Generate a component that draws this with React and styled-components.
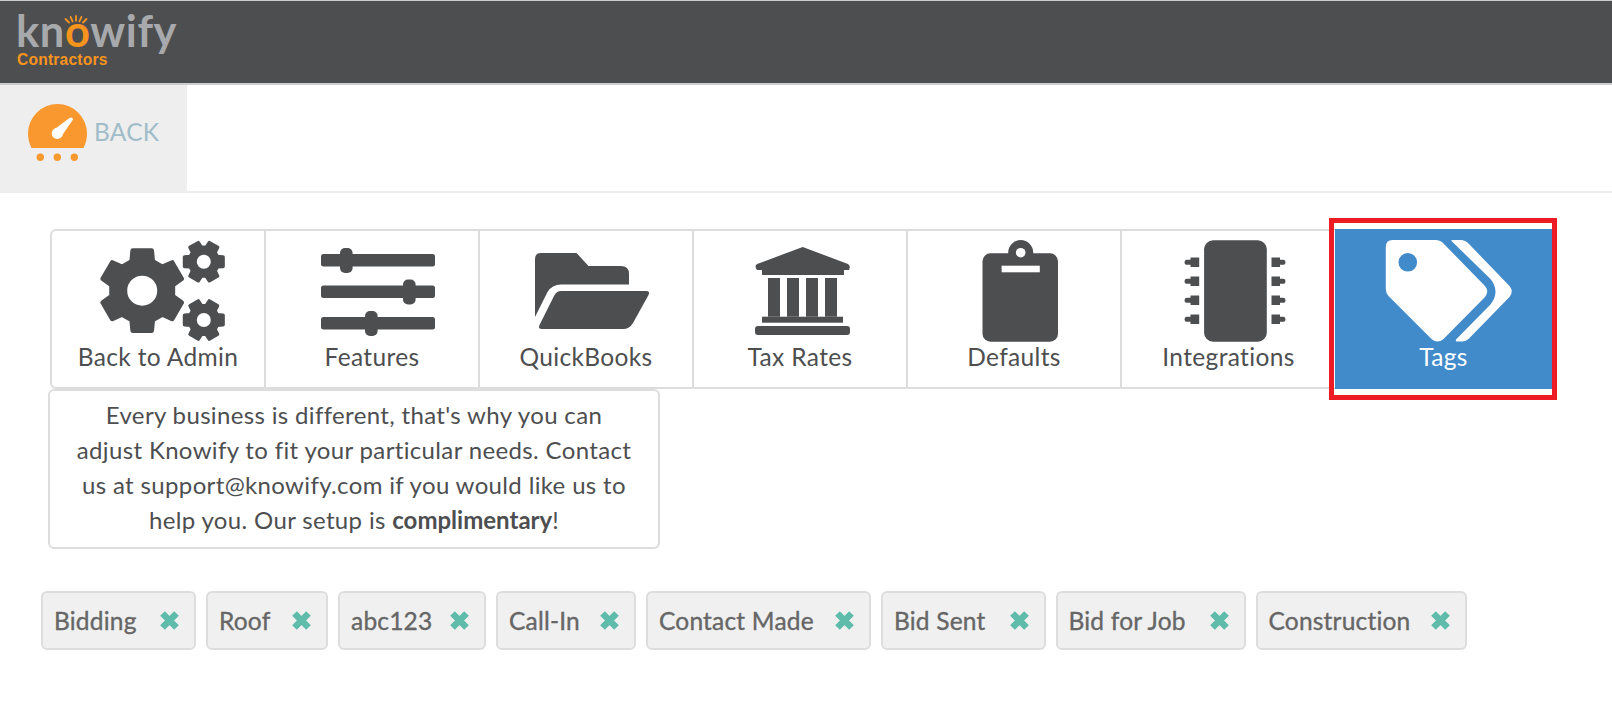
import React from "react";
import styled, { createGlobalStyle } from "styled-components";

const Global = createGlobalStyle`
  html, body { margin: 0; padding: 0; background: #fff; }
  body { font-family: Lato, "Open Sans", sans-serif; color: #4d4e50; }
`;

const Page = styled.div`
  width: 1612px;
  min-height: 717px;
  border-top: 1px solid #ccc;
  box-sizing: border-box;
  position: relative;
  overflow: hidden;
`;
const Header = styled.header`
  height: 82px;
  background: #4d4e50;
  border-bottom: 2px solid #ccc;
  padding-left: 16px;
`;
const Logo = styled.div`
  position: relative;
  width: 170px;
  padding-top: 7px;
`;
const LogoWord = styled.div`
  font: 700 43.5px/44px Lato, sans-serif;
  color: #a7a9ac;
  letter-spacing: 0.6px;
  height: 44px;
  span { color: #f7941e; }
`;
const LogoSub = styled.div`
  font: 700 15.6px/14px "Liberation Sans", sans-serif;
  letter-spacing: 0.2px;
  color: #f7941e;
  padding: 1px 0 0 1px;
`;
const Rays = styled.svg`
  position: absolute;
  left: 47px;
  top: 14px;
`;
const BackStrip = styled.nav`
  height: 106px;
  border-bottom: 2px solid #eee;
  display: flex;
`;
const BackLink = styled.a`
  width: 187px;
  background: #eee;
  display: flex;
  align-items: flex-start;
  gap: 6px;
  padding: 19px 0 0 28px;
  box-sizing: border-box;
`;
const BackText = styled.span`
  font: 400 24.5px/28px Lato, sans-serif;
  letter-spacing: 0.2px;
  color: #a0bdc9;
  margin-top: 14px;
`;
const Main = styled.main`
  padding: 36px 0 0 50px;
`;
const TabBar = styled.div`
  display: flex;
  height: 160px;
`;
const Tab = styled.a`
  position: relative;
  width: ${(p) => p.$w}px;
  box-sizing: border-box;
  display: flex;
  flex-direction: column;
  align-items: center;
  padding-top: ${(p) => (p.$active ? 9 : 7)}px;
  background: ${(p) => (p.$active ? "#428bca" : "#fff")};
  color: ${(p) => (p.$active ? "#fff" : "#4d4e50")};
  border-top: ${(p) => (p.$active ? "none" : "2px solid #ddd")};
  border-bottom: ${(p) => (p.$active ? "none" : "2px solid #ddd")};
  border-right: ${(p) => (p.$divider ? "2px solid #ddd" : "none")};
  border-left: ${(p) => (p.$first ? "2px solid #ddd" : "none")};
  border-radius: ${(p) => (p.$first ? "6px 0 0 6px" : "0")};
`;
const TabLabel = styled.span`
  font-size: 24.5px;
  line-height: 24px;
  margin-top: 1px;
  letter-spacing: 0.35px;
`;
const Highlight = styled.div`
  position: absolute;
  left: 1329px;
  top: 217px;
  width: 228px;
  height: 182px;
  box-sizing: border-box;
  border: 5.5px solid #ed1c24;
  pointer-events: none;
`;
const Notice = styled.p`
  width: 612px;
  height: 160px;
  box-sizing: border-box;
  margin: 0 0 0 -2px;
  border: 2px solid #ddd;
  border-radius: 6px;
  padding: 6px 26px 0;
  text-align: center;
  font-size: 24px;
  line-height: 35px;
  letter-spacing: 0.35px;
  color: #4d4e50;
  b { font-weight: 700; letter-spacing: 0; }
`;
const ChipRow = styled.div`
  display: flex;
  gap: 10px;
  margin: 42px 0 0 -9px;
`;
const Chip = styled.span`
  width: ${(p) => p.$w}px;
  height: 59px;
  box-sizing: border-box;
  display: flex;
  align-items: center;
  justify-content: space-between;
  padding: 0 14px 0 11px;
  background: #f0f0f0;
  border: 2px solid #ddd;
  border-radius: 6px;
  font-size: 24.5px;
  letter-spacing: 0.2px;
  -webkit-text-stroke: 0.35px #666;
  color: #666;
`;

const gearPath = (cx, cy, rOut, rRoot, rot, hwOut, hwRoot) => {
  const pts = [];
  for (let i = 0; i < 6; i++) {
    const a = rot + (i * Math.PI) / 3;
    [[rRoot, -hwRoot], [rOut, -hwOut], [rOut, hwOut], [rRoot, hwRoot]].forEach(([r, d]) => {
      pts.push(`${(cx + r * Math.sin(a + d)).toFixed(2)},${(cy - r * Math.cos(a + d)).toFixed(2)}`);
    });
  }
  return `M${pts.join("L")}Z`;
};

const Ink = "#4d4e50";
const IconBox = styled.svg`
  display: block;
  flex: none;
`;
const Icon = ({ x, children }) => (
  <IconBox width="140" height="106" viewBox={`${x} 238 140 106`}>{children}</IconBox>
);

const GearsIcon = () => (
  <Icon x={88.5}>
    <g fill={Ink} stroke={Ink} strokeWidth="5" strokeLinejoin="round">
      <path d={gearPath(142.7, 290.7, 41, 31, 0, 0.23, 0.34)} />
      <path d={gearPath(204.3, 261.7, 19.8, 14.5, Math.PI / 6, 0.24, 0.36)} strokeWidth="3.6" />
      <path d={gearPath(204.3, 320, 19.8, 14.5, Math.PI / 6, 0.24, 0.36)} strokeWidth="3.6" />
    </g>
    <g fill="#fff">
      <circle cx="142.7" cy="290.7" r="15" />
      <circle cx="204.3" cy="261.7" r="7" />
      <circle cx="204.3" cy="320" r="7" />
    </g>
  </Icon>
);
const SlidersIcon = () => (
  <Icon x={302}>
    <g fill={Ink}>
      <rect x="321" y="254" width="114" height="12.6" rx="2.5" />
      <rect x="321" y="285.5" width="114" height="12.6" rx="2.5" />
      <rect x="321" y="317" width="114" height="12.6" rx="2.5" />
      <rect x="340" y="248" width="12.6" height="25" rx="5" />
      <rect x="403" y="279.5" width="12.6" height="25" rx="5" />
      <rect x="365" y="311" width="12.6" height="25" rx="5" />
    </g>
  </Icon>
);
const FolderIcon = () => (
  <Icon x={516}>
    <g fill={Ink}>
      <path d="M541 253H576.5L588.5 266H621Q629 266 629 274V284.5H561Q552 284.5 547.5 292L535 317V259Q535 253 541 253Z" />
      <path d="M561 291H646Q650.5 291 648.5 295L633 323Q629.5 329 623 329H542Q537.5 329 539.5 325L554 296Q556.5 291 561 291Z" />
    </g>
  </Icon>
);
const BankIcon = () => (
  <Icon x={730}>
    <g fill={Ink}>
      <path d="M802.7 247L848 264Q851 266 849 270H844V275H762V270H757Q754 266 757 264Z" />
      <rect x="768" y="278" width="12" height="38.7" />
      <rect x="787" y="278" width="12" height="38.7" />
      <rect x="806" y="278" width="12" height="38.7" />
      <rect x="825" y="278" width="12" height="38.7" />
      <rect x="762" y="316.7" width="81" height="6" />
      <rect x="755" y="326" width="95" height="9" rx="3" />
    </g>
  </Icon>
);
const ClipboardIcon = () => (
  <Icon x={944}>
    <rect x="982.5" y="253.3" width="75.5" height="88.4" rx="8" fill={Ink} />
    <circle cx="1020.7" cy="252.6" r="12.5" fill={Ink} />
    <circle cx="1020.7" cy="252.7" r="4.8" fill="#fff" />
    <rect x="1001.6" y="265.7" width="38.2" height="6.6" fill="#fff" />
  </Icon>
);
const pinYs = [262.3, 281.3, 300.3, 319.3];
const ChipIcon = () => (
  <Icon x={1158.5}>
    <rect x="1203.6" y="240.3" width="62.7" height="101.4" rx="9" fill={Ink} />
    {pinYs.map((y) => (
      <g key={y} fill={Ink}>
        <path d={`M1190 ${y - 4.7}H1198.7V${y + 4.7}H1190V${y + 2.5}H1186Q1184 ${y + 2.5} 1184 ${y}Q1184 ${y - 2.5} 1186 ${y - 2.5}H1190Z`} />
        <path d={`M1271 ${y - 4.7}H1279.5V${y - 2.5}H1283Q1285 ${y - 2.5} 1285 ${y}Q1285 ${y + 2.5} 1283 ${y + 2.5}H1279.5V${y + 4.7}H1271Z`} />
      </g>
    ))}
  </Icon>
);
const TagsIcon = () => (
  <Icon x={1373.5}>
    <path
      fill="#fff"
      fillRule="evenodd"
      d="M1392 240H1435Q1440 240 1443 243.5L1484.5 286Q1489 291.5 1484.5 297L1443 339Q1437 344 1431 339L1388 296Q1385.3 293 1385.3 289V247Q1385.3 240 1392 240ZM1407.3 253A9.3 9.3 0 1 0 1407.3 271.6A9.3 9.3 0 1 0 1407.3 253Z"
    />
    <path
      fill="#fff"
      d="M1451 240H1460Q1465 240 1468 243.5L1509 286Q1513.5 291.5 1509 297L1468 339Q1464.5 342 1460 341.5H1456Q1454.5 340.5 1456 339L1490 304.5Q1500 291.5 1490 279L1451 241Z"
    />
  </Icon>
);
const CloseIcon = () => (
  <svg width="21" height="21" viewBox="0 0 21 21" aria-hidden="true">
    <path d="M3.5 3.5L17.5 17.5M17.5 3.5L3.5 17.5" stroke="#5fbcab" strokeWidth="6.6" strokeLinecap="butt" />
  </svg>
);
const GaugeIcon = () => (
  <svg width="60" height="58" viewBox="28 104 60 58" aria-hidden="true" style={{ flex: "none" }}>
    <path d="M31.5 148Q28 141 28 133.5A29.5 29.5 0 0 1 87 133.5Q87 141 83.5 148Z" fill="#f8982f" />
    <circle cx="57.3" cy="133.4" r="5.6" fill="#fff" />
    <path d="M53.5 130L69.5 118Q72.5 116.5 73 119.5L61 137Z" fill="#fff" />
    <g fill="#f8982f">
      <circle cx="40.3" cy="157.3" r="3.7" />
      <circle cx="57.3" cy="157.3" r="3.7" />
      <circle cx="74.3" cy="157.3" r="3.7" />
    </g>
  </svg>
);

const tabs = [
  { label: "Back to Admin", icon: GearsIcon, w: 216, first: true, divider: true },
  { label: "Features", icon: SlidersIcon, w: 214, divider: true },
  { label: "QuickBooks", icon: FolderIcon, w: 214, divider: true },
  { label: "Tax Rates", icon: BankIcon, w: 214, divider: true },
  { label: "Defaults", icon: ClipboardIcon, w: 214, divider: true },
  { label: "Integrations", icon: ChipIcon, w: 213 },
  { label: "Tags", icon: TagsIcon, w: 217, active: true },
];
const chips = [
  ["Bidding", 155],
  ["Roof", 122],
  ["abc123", 148],
  ["Call-In", 140],
  ["Contact Made", 225],
  ["Bid Sent", 164.5],
  ["Bid for Job", 190],
  ["Construction", 211],
];

export default function App() {
  return (
    <Page>
      <Global />
      <Header>
        <Logo>
          <LogoWord>kn<span>o</span>wify</LogoWord>
          <LogoSub>Contractors</LogoSub>
          <Rays width="26" height="11" viewBox="0 0 24 11" aria-hidden="true">
            <g stroke="#f7941e" strokeWidth="1.8" strokeLinecap="round">
              <path d="M1.5 4L5 7.5M6.5 1.8L8.6 6.4M12 1V5.8M17.5 1.8L15.4 6.4M22.5 4L19 7.5" />
            </g>
          </Rays>
        </Logo>
      </Header>
      <BackStrip>
        <BackLink>
          <GaugeIcon />
          <BackText>BACK</BackText>
        </BackLink>
      </BackStrip>
      <Main>
        <TabBar>
          {tabs.map((t) => (
            <Tab key={t.label} $w={t.w} $first={t.first} $divider={t.divider} $active={t.active}>
              <t.icon />
              <TabLabel>{t.label}</TabLabel>
            </Tab>
          ))}
        </TabBar>
        <Notice>
          Every business is different, that's why you can adjust Knowify to fit your particular needs. Contact us at support@knowify.com if you would like us to help you. Our setup is <b>complimentary</b>!
        </Notice>
        <ChipRow>
          {chips.map(([label, w]) => (
            <Chip key={label} $w={w}>
              {label}
              <CloseIcon />
            </Chip>
          ))}
        </ChipRow>
      </Main>
      <Highlight />
    </Page>
  );
}
